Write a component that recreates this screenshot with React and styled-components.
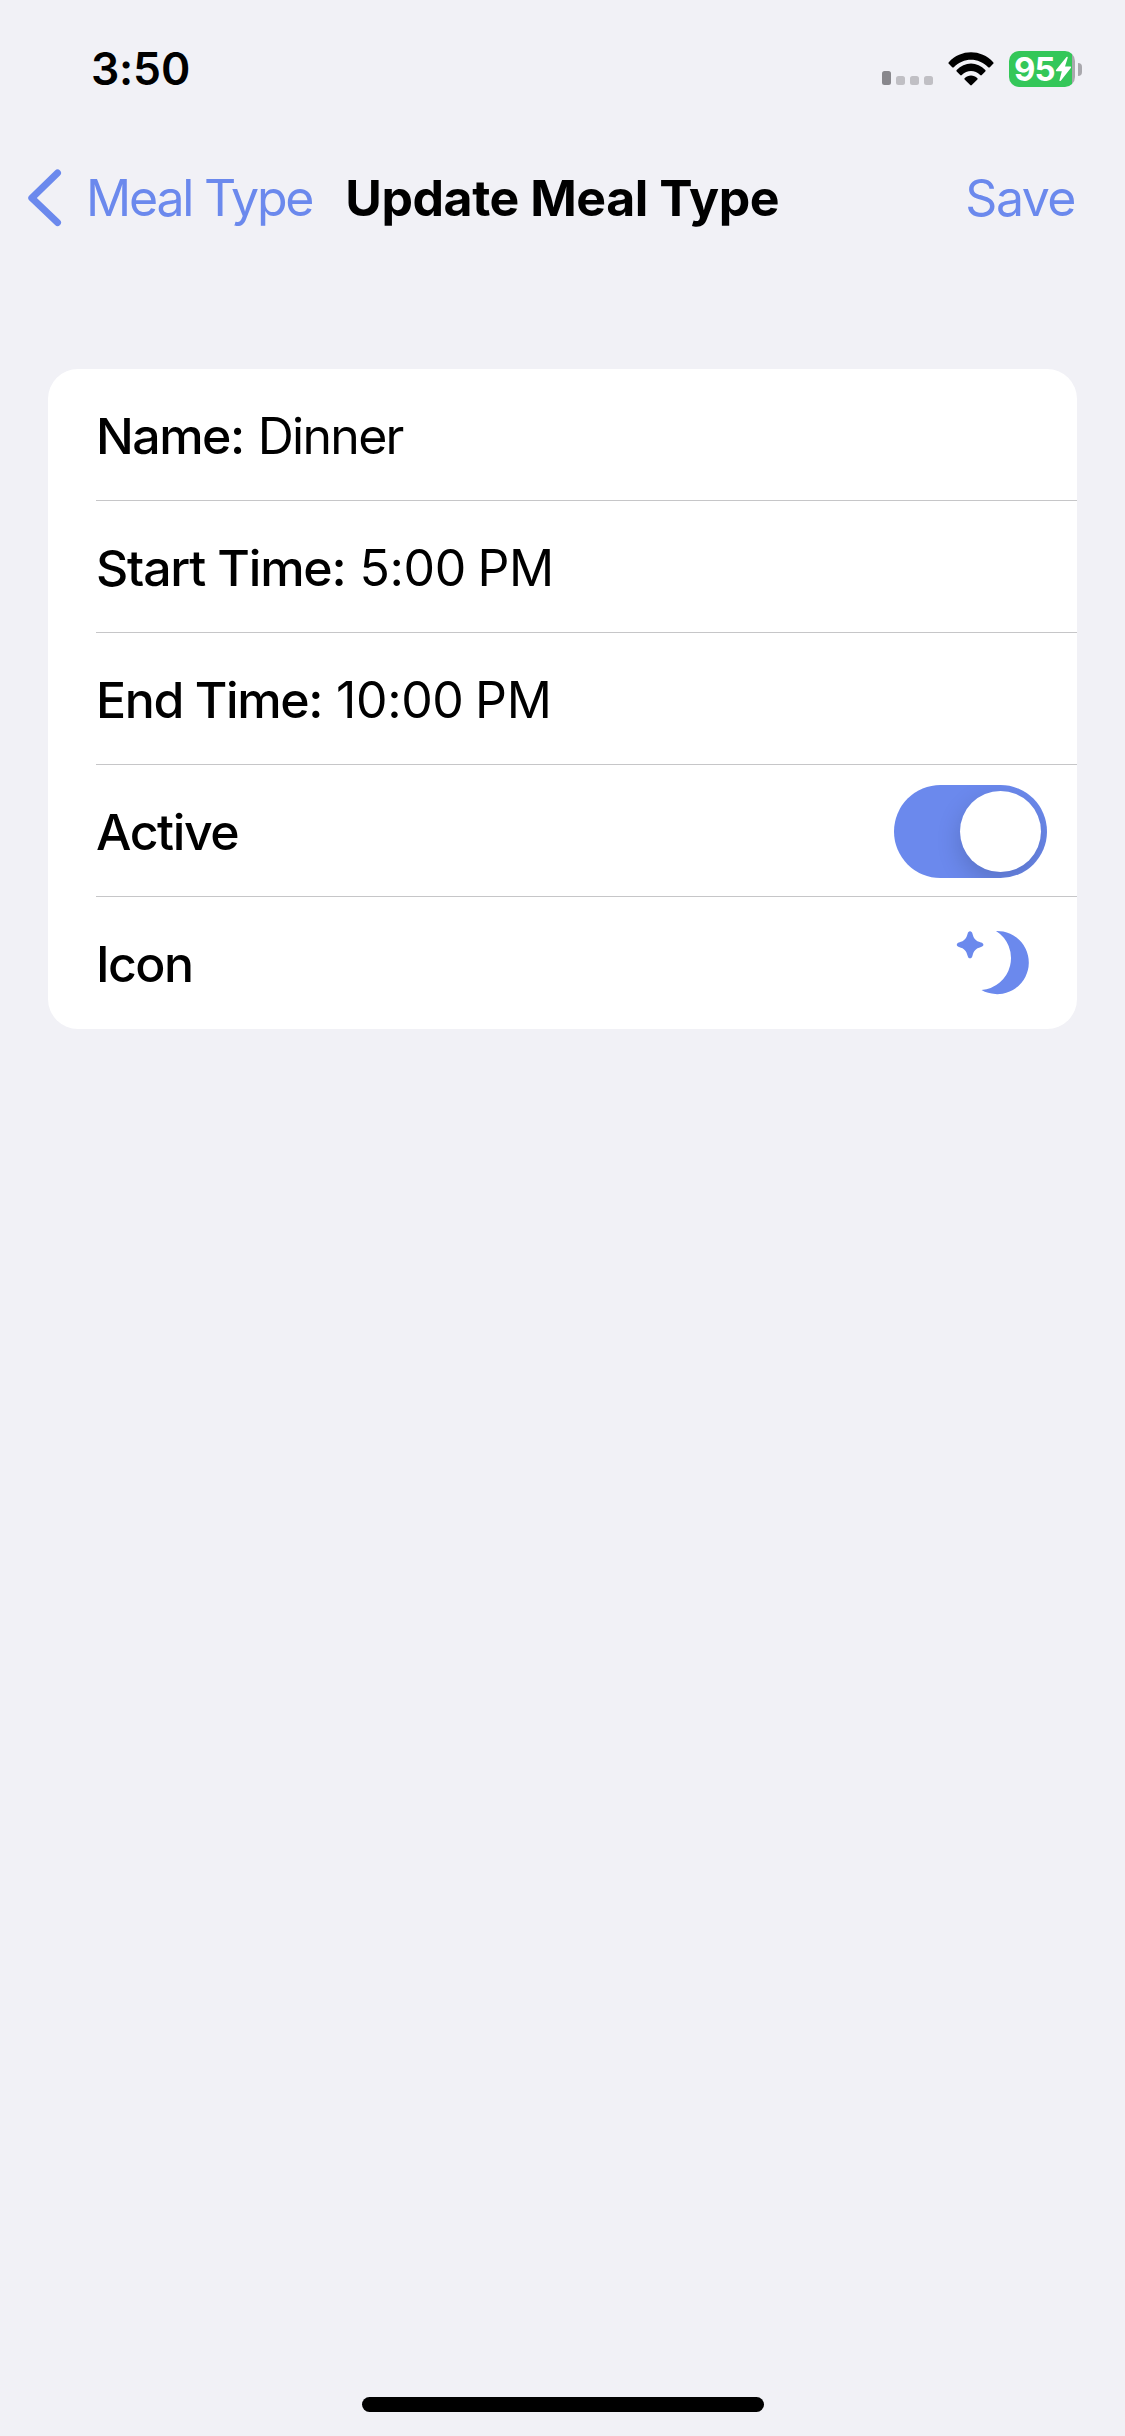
import React, { useState } from "react";
import styled, { createGlobalStyle } from "styled-components";

const GlobalStyle = createGlobalStyle`
  * {
    box-sizing: border-box;
  }
  body {
    margin: 0;
    background-color: #f1f1f6;
    font-family: Inter, "Liberation Sans", sans-serif;
    color: #000;
  }
`
const Screen = styled.div`
  width: 1125px;
  height: 2436px;
  display: flex;
  flex-direction: column;
  background-color: #f1f1f6;
`
const StatusBar = styled.header`
  height: 132px;
  padding: 0 43px 0 91px;
  display: flex;
  justify-content: space-between;
`
const Clock = styled.div`
  margin-top: 42px;
  font-size: 44.5px;
  line-height: 54px;
  font-weight: 600;
  letter-spacing: -0.2px;
`
const StatusIcons = styled.div`
  height: 36px;
  margin-top: 51px;
  display: flex;
`
const Signal = styled.div`
  height: 34px;
  display: flex;
  align-items: flex-end;
  gap: 5px;
  margin-right: 15px;
`
const SignalBar = styled.span`
  width: 9px;
  height: ${(props) => (props.$on ? "14px" : "9px")};
  border-radius: 2.5px;
  background-color: ${(props) => (props.$on ? "#88878c" : "#c0bfc4")};
`
const WifiIcon = styled.svg`
  width: 46px;
  height: 34px;
  margin-top: 1px;
  margin-right: 15px;
`
const Battery = styled.div`
  display: flex;
  align-items: center;
  gap: 3px;
`
const BatteryBody = styled.div`
  width: 66px;
  height: 36px;
  padding-left: 5px;
  border-radius: 10px;
  display: flex;
  align-items: center;
  background: linear-gradient(to right, #34c759 63px, #a9a8ad 63px);
`
const BatteryLevel = styled.span`
  width: 41px;
  color: #fff;
  font-size: 33px;
  line-height: 36px;
  font-weight: 700;
  letter-spacing: -1px;
`
const BatteryTip = styled.span`
  width: 4px;
  height: 13px;
  border-radius: 0 5px 5px 0;
  background-color: #a9a8ad;
`
const NavBar = styled.nav`
  height: 132px;
  padding: 0 50px 0 27px;
  display: flex;
  align-items: center;
  font-size: 50px;
  line-height: 60px;
  white-space: nowrap;
`
const NavButton = styled.button`
  padding: 0;
  border: none;
  background: none;
  display: flex;
  align-items: center;
  font: inherit;
  color: #6b89ed;
  letter-spacing: ${(props) => props.$spacing};
`
const Chevron = styled.svg`
  width: 35px;
  height: 60px;
  margin-right: 24px;
`
const Title = styled.h1`
  flex: 1;
  margin: 0 0 0 33px;
  font-size: 50px;
  font-weight: 700;
  letter-spacing: -0.45px;
`
const Form = styled.main`
  margin: 105px 48px 0;
  border-radius: 30px;
  background-color: #fff;
`
const Row = styled.div`
  height: 132px;
  margin-left: 48px;
  padding-top: 2px;
  padding-right: ${(props) => props.$inset || "30px"};
  border-bottom: 1px solid #c6c6c8;
  display: flex;
  align-items: center;
  font-size: 50px;
  line-height: 60px;
  white-space: nowrap;
  &:last-child {
    border-bottom: none;
  }
`
const Label = styled.span`
  font-weight: 500;
  letter-spacing: ${(props) => props.$spacing || "-1.4px"};
`
const Value = styled.span`
  margin-left: 14px;
  letter-spacing: ${(props) => props.$spacing || "-0.4px"};
  word-spacing: -2px;
`
const Toggle = styled.button`
  width: 153px;
  height: 93px;
  margin-left: auto;
  padding: 6px;
  border: none;
  border-radius: 47px;
  display: flex;
  justify-content: ${(props) => (props.$on ? "flex-end" : "flex-start")};
  background-color: ${(props) => (props.$on ? "#6b89ed" : "#e9e9eb")};
  overflow: hidden;
`
const Knob = styled.span`
  width: 81px;
  height: 81px;
  border-radius: 50%;
  background-color: #fff;
  box-shadow: 0 9px 24px rgba(0, 0, 0, 0.17);
`
const MoonIcon = styled.svg`
  width: 74px;
  height: 65px;
  margin: 0 0 3px auto;
  fill: #6b89ed;
`
const HomeIndicator = styled.div`
  width: 402px;
  height: 15px;
  margin: auto auto 24px 362px;
  border-radius: 8px;
  background-color: #000;
`

const App = () => {
  const [active, setActive] = useState(true);

  return (
    <Screen>
      <GlobalStyle />
      <StatusBar>
        <Clock>3:50</Clock>
        <StatusIcons>
          <Signal>
            <SignalBar $on />
            <SignalBar />
            <SignalBar />
            <SignalBar />
          </Signal>
          <WifiIcon viewBox="0 0 46 34">
            <path d="M0.8 10.2C13 -3 33 -3 45.2 10.2Q46 11 45.2 11.8L41.8 15.2Q41 16 40.2 15.2C30.5 5.2 15.5 5.2 5.8 15.2Q5 16 4.2 15.2L0.8 11.8Q0 11 0.8 10.2Z" />
            <path d="M8.7 17.9C16.5 9.2 29.5 9.2 37.3 17.9Q38 18.7 37.3 19.5L33.8 23Q33 23.8 32.2 23C27 17.6 19 17.6 13.8 23Q13 23.8 12.2 23L8.7 19.5Q8 18.7 8.7 17.9Z" />
            <path d="M16.6 26.2C20.2 22.6 25.8 22.6 29.4 26.2Q30 26.8 29.4 27.5L23.8 33Q23 33.8 22.2 33L16.6 27.5Q16 26.8 16.6 26.2Z" />
          </WifiIcon>
          <Battery>
            <BatteryBody>
              <BatteryLevel>95</BatteryLevel>
              <svg width="17" height="26" viewBox="0 0 17 26" fill="#fff">
                <path d="M11.5 1L1 14Q0.4 15.2 1.6 15.2H6.8L4.4 24.4Q4.6 25.6 5.8 24.8L16 11.8Q16.6 10.4 15.2 10.4H10L12.8 1.6Q12.6 0.2 11.5 1Z" />
              </svg>
            </BatteryBody>
            <BatteryTip />
          </Battery>
        </StatusIcons>
      </StatusBar>
      <NavBar>
        <NavButton $spacing="-2.2px">
          <Chevron
            viewBox="0 0 35 60"
            fill="none"
            stroke="#6b89ed"
            strokeWidth="7"
            strokeLinecap="round"
            strokeLinejoin="round"
          >
            <path d="M30.5 5L4.8 30L30.5 54.5" />
          </Chevron>
          Meal Type
        </NavButton>
        <Title>Update Meal Type</Title>
        <NavButton $spacing="-1.5px">Save</NavButton>
      </NavBar>
      <Form>
        <Row>
          <Label $spacing="-1.5px">Name:</Label>
          <Value $spacing="-1.7px">Dinner</Value>
        </Row>
        <Row>
          <Label $spacing="-1.2px">Start Time:</Label>
          <Value>5:00 PM</Value>
        </Row>
        <Row>
          <Label>End Time:</Label>
          <Value>10:00 PM</Value>
        </Row>
        <Row>
          <Label>Active</Label>
          <Toggle $on={active} onClick={() => setActive(!active)}>
            <Knob />
          </Toggle>
        </Row>
        <Row $inset="47px">
          <Label $spacing="-1.6px">Icon</Label>
          <MoonIcon viewBox="0 0 74 65">
            <path d="M14 1.3C15.3 1.3 16 2.2 16.4 3.6C17.8 8.8 19.4 11 25 12.6C26.6 13 27.4 13.8 27.4 14.8C27.4 15.8 26.6 16.6 25 17C19.4 18.6 17.8 20.8 16.4 26C16 27.5 15.3 28.3 14 28.3C12.8 28.3 12 27.5 11.7 26C10.2 20.8 8.6 18.6 3 17C1.5 16.6 0.8 15.8 0.8 14.8C0.8 13.8 1.5 13 3 12.6C8.6 11 10.2 8.8 11.7 3.6C12 2.2 12.8 1.3 14 1.3Z" />
            <path d="M40 1A31.6 31.6 0 1 1 25.5 60A32 32 0 0 0 40 1Z" />
          </MoonIcon>
        </Row>
      </Form>
      <HomeIndicator />
    </Screen>
  );
};

export default App;
